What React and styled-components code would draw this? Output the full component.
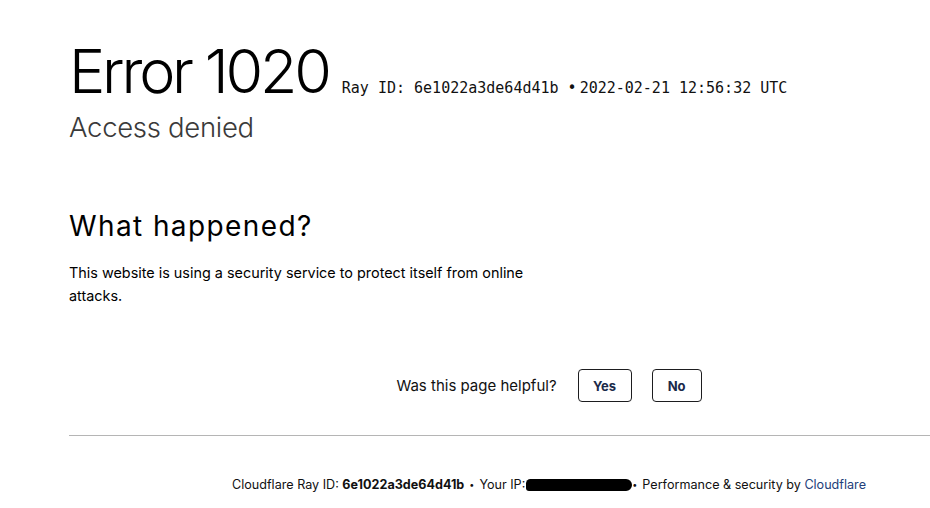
import React from 'react'
import styled, { createGlobalStyle } from 'styled-components'

const GlobalStyle = createGlobalStyle`
  html, body {
    margin: 0;
    padding: 0;
    background: #fff;
    overflow: hidden;
  }
  body {
    font-family: Inter, "Liberation Sans", sans-serif;
    color: #000;
  }
`

function App() {
  return (
    <>
      <GlobalStyle />
      <Viewport>
        <Page>
          <Header>
            <TitleRow>
              <Title>Error 1020</Title>
              <RayInfo>Ray ID: 6e1022a3de64d41b <Dot>•</Dot>2022-02-21 12:56:32 UTC</RayInfo>
            </TitleRow>
            <Subtitle>Access denied</Subtitle>
          </Header>

          <Section>
            <SectionTitle>What happened?</SectionTitle>
            <Paragraph>
              This website is using a security service to protect itself from online attacks.
            </Paragraph>
          </Section>

          <Feedback>
            <FeedbackLabel>Was this page helpful?</FeedbackLabel>
            <FeedbackButton w={54}>Yes</FeedbackButton>
            <FeedbackButton w={50}>No</FeedbackButton>
          </Feedback>

          <Footer>
            <span>Cloudflare Ray ID: <Strong>6e1022a3de64d41b</Strong></span>
            <Sep>•</Sep>
            <span>Your IP:</span>
            <Redacted />
            <Sep tight>•</Sep>
            <span>Performance &amp; security by <Link>Cloudflare</Link></span>
          </Footer>
        </Page>
      </Viewport>
    </>
  )
}

export default App

const Viewport = styled.div`
  width: 100vw;
  overflow: hidden;
`

const Page = styled.div`
  width: 960px;
  padding: 40px 0 0 69px;
`

const Header = styled.div`
  display: flex;
  flex-direction: column;
`

const TitleRow = styled.div`
  display: flex;
  align-items: baseline;
  gap: 13px;
`

const Title = styled.h1`
  margin: 0;
  font-family: Inter, "Liberation Sans", sans-serif;
  font-weight: 300;
  font-size: 61px;
  line-height: 63px;
  letter-spacing: -3.2px;
  color: #000;
`

const RayInfo = styled.span`
  font-family: "DejaVu Sans Mono", "Liberation Mono", monospace;
  font-size: 15px;
  color: #111;
  white-space: nowrap;
`

const Dot = styled.span`
  margin-right: 3px;
`

const Subtitle = styled.h2`
  margin: 7px 0 0;
  font-family: Inter, "Liberation Sans", sans-serif;
  font-weight: 300;
  font-size: 27.5px;
  line-height: 34px;
  letter-spacing: -0.3px;
  color: #3a3a3a;
`

const Section = styled.div`
  margin-top: 65px;
  width: 480px;
`

const SectionTitle = styled.h2`
  margin: 0;
  font-family: Inter, "Liberation Sans", sans-serif;
  font-weight: 400;
  font-size: 28px;
  line-height: 34px;
  letter-spacing: 1.4px;
  color: #000;
`

const Paragraph = styled.p`
  margin: 18px 0 0;
  font-family: Inter, "Liberation Sans", sans-serif;
  font-size: 14.4px;
  line-height: 23px;
  color: #000;
`

const Feedback = styled.div`
  margin-top: 62px;
  width: 960px;
  display: flex;
  justify-content: center;
  align-items: center;
  gap: 20px;
`

const FeedbackLabel = styled.span`
  font-family: Inter, "Liberation Sans", sans-serif;
  font-size: 15px;
  color: #111;
  margin-right: 1px;
`

const FeedbackButton = styled.button`
  width: ${p => p.w}px;
  height: 33px;
  border: 1px solid #1d1d1f;
  border-radius: 4px;
  background: #fff;
  font-family: Inter, "Liberation Sans", sans-serif;
  font-weight: 700;
  font-size: 13px;
  color: #1b2a4a;
  padding: 0;
  cursor: pointer;
`

const Footer = styled.div`
  margin-top: 33px;
  border-top: 1px solid #b5b5b5;
  width: 960px;
  padding-top: 41px;
  display: flex;
  justify-content: center;
  align-items: center;
  font-family: Inter, "Liberation Sans", sans-serif;
  font-size: 12.6px;
  color: #111;
  white-space: nowrap;
`

const Strong = styled.strong`
  font-weight: 700;
`

const Sep = styled.span`
  margin: ${p => (p.tight ? '0 5px 0 0' : '0 5px')};
  font-size: 9px;
  line-height: 1;
`

const Redacted = styled.span`
  display: inline-block;
  width: 106px;
  height: 12px;
  margin-left: 1px;
  background: #000;
  border-radius: 6px 8px 8px 4px;
`

const Link = styled.a`
  color: #23407a;
  text-decoration: none;
`
